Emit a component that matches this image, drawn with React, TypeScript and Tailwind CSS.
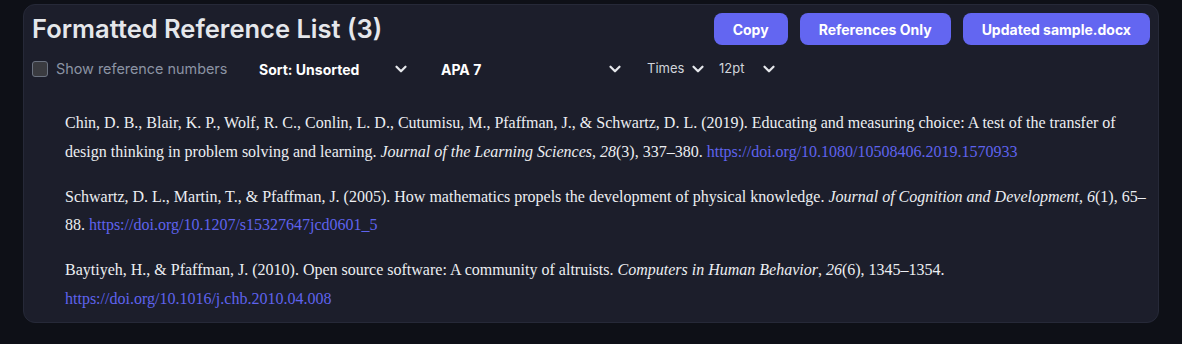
import React, { useState } from 'react';
import { ChevronDown } from 'lucide-react';

interface Reference {
  before: string;
  journal: string;
  volume: string;
  after: string;
  doi: string;
}

const REFERENCES: Reference[] = [
  {
    before:
      'Chin, D. B., Blair, K. P., Wolf, R. C., Conlin, L. D., Cutumisu, M., Pfaffman, J., & Schwartz, D. L. (2019). Educating and measuring choice: A test of the transfer of design thinking in problem solving and learning. ',
    journal: 'Journal of the Learning Sciences',
    volume: '28',
    after: '(3), 337–380. ',
    doi: 'https://doi.org/10.1080/10508406.2019.1570933',
  },
  {
    before:
      'Schwartz, D. L., Martin, T., & Pfaffman, J. (2005). How mathematics propels the development of physical knowledge. ',
    journal: 'Journal of Cognition and Development',
    volume: '6',
    after: '(1), 65–88. ',
    doi: 'https://doi.org/10.1207/s15327647jcd0601_5',
  },
  {
    before: 'Baytiyeh, H., & Pfaffman, J. (2010). Open source software: A community of altruists. ',
    journal: 'Computers in Human Behavior',
    volume: '26',
    after: '(6), 1345–1354. ',
    doi: 'https://doi.org/10.1016/j.chb.2010.04.008',
  },
];

const FakeSelect: React.FC<{ label: string; className: string; bold?: boolean }> = ({ label, className, bold }) => (
  <div className={`flex items-center justify-between h-8 ${bold ? 'text-[14px] font-bold text-white' : 'text-[13px] text-[#d1d5db]'} ${className}`}>
    <span>{label}</span>
    <ChevronDown size={18} strokeWidth={3} className="text-[#e5e7eb]" />
  </div>
);

export default function App() {
  const [showNumbers, setShowNumbers] = useState(false);

  return (
    <div className="min-h-[344px] bg-[#0e1017] px-[23px] pt-1 pb-5 font-['Inter',sans-serif]">
      <div className="rounded-xl border border-[#262938] bg-[#1c1e2b] p-2">
        {/* Header */}
        <div className="flex items-center justify-between h-8">
          <h2 className="text-[25.5px] font-semibold text-[#e5e7eb] leading-8">
            Formatted Reference List (3)
          </h2>
          <div className="flex gap-3">
            <button className="h-8 px-[19px] rounded-lg bg-[#6366f1] text-white text-[14px] font-bold">Copy</button>
            <button className="h-8 px-[19px] rounded-lg bg-[#6366f1] text-white text-[14px] font-bold">References Only</button>
            <button className="h-8 px-[19px] rounded-lg bg-[#6366f1] text-white text-[14px] font-bold">Updated sample.docx</button>
          </div>
        </div>

        {/* Options */}
        <div className="flex items-center mt-[8px] h-8">
          <label className="flex items-center gap-2 w-[219px] cursor-pointer" onClick={() => setShowNumbers(!showNumbers)}>
            <span className="w-4 h-4 rounded-[3px] border border-[#6b7280] bg-[#3a3b40]" />
            <span className="text-[14.4px] text-[#8b93a3]">Show reference numbers</span>
          </label>
          <FakeSelect label="Sort: Unsorted" bold className="w-[164px] pl-2 pr-[5px]" />
          <FakeSelect label="APA 7" bold className="ml-[18px] w-[196px] pl-2 pr-[5px]" />
          <FakeSelect label="Times" className="ml-3 w-[68px] pl-1.5 pr-[2px]" />
          <FakeSelect label="12pt" className="ml-[4px] w-[67px] pl-1.5 pr-[2px]" />
        </div>

        {/* References */}
        <div className="pt-[24px] pl-[33px] font-['Liberation_Serif','Times_New_Roman',serif] text-[16px] leading-[1.8] text-[#eceef2]">
          {REFERENCES.map((r, i) => (
            <p key={i} className={i < REFERENCES.length - 1 ? 'mb-4' : ''}>
              {r.before}
              <i>{r.journal}</i>, <i>{r.volume}</i>
              {r.after}
              <a className="text-[#5f63ee]">{r.doi}</a>
            </p>
          ))}
        </div>
      </div>
    </div>
  );
}
